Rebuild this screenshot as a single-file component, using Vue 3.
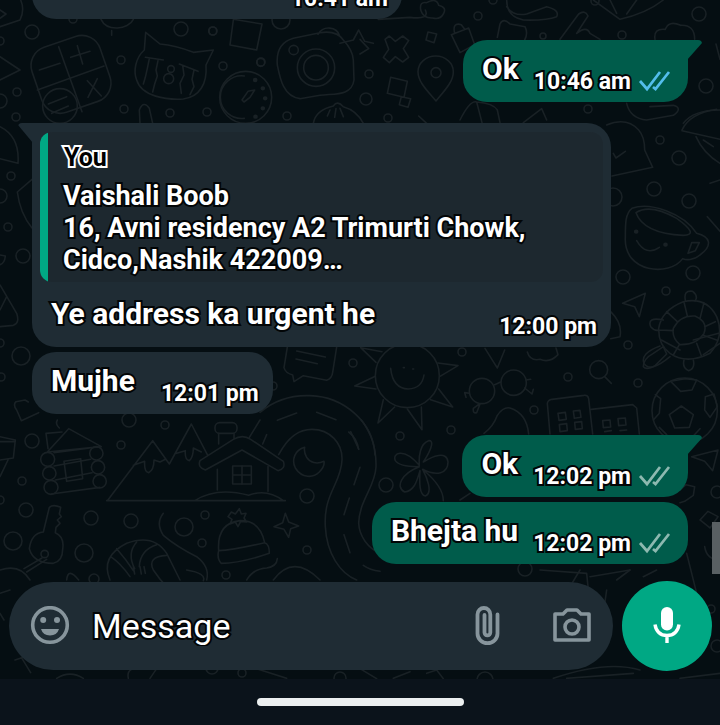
<script setup>
import { ref } from 'vue'

const draft = ref('')

const messages = [
  { id: 1, mine: false, time: '10:41 am', wide: true },
  { id: 2, mine: true, text: 'Ok', time: '10:46 am', read: true, first: true },
  {
    id: 3,
    mine: false,
    text: 'Ye address ka urgent he',
    time: '12:00 pm',
    first: true,
    quote: {
      author: 'You',
      lines: ['Vaishali Boob', '16, Avni residency A2 Trimurti Chowk,', 'Cidco,Nashik 422009…'],
    },
  },
  { id: 4, mine: false, text: 'Mujhe', time: '12:01 pm' },
  { id: 5, mine: true, text: 'Ok', time: '12:02 pm', first: true },
  { id: 6, mine: true, text: 'Bhejta hu', time: '12:02 pm' },
]

// Loose bubbles of the wallpaper: x, y, radius
const dots = [
  [32, 32, 7], [17, 92, 4], [16, 117, 4], [0, 101, 7], [0, 41, 4], [73, 19, 4],
  [121, 60, 4], [124, 109, 4], [181, 29, 7], [213, 31, 4], [223, 66, 4], [261, 62, 4],
  [207, 112, 4], [170, 113, 4], [287, 116, 4], [281, 20, 9],
  [478, 16, 4], [493, 0, 4], [369, 74, 4], [366, 99, 6], [388, 118, 4], [588, 109, 4],
  [543, 36, 3], [699, 14, 7], [706, 86, 7], [595, 1, 4], [622, 35, 4],
  [660, 140, 4], [679, 158, 7], [613, 197, 9], [654, 189, 7], [689, 201, 7],
  [623, 277, 7], [693, 273, 7], [666, 291, 4], [628, 345, 4],
  [11, 176, 4], [0, 196, 7], [8, 227, 4], [23, 256, 7], [21, 356, 9], [0, 343, 4], [1, 377, 4],
  [32, 441, 7], [22, 481, 4], [26, 510, 7], [0, 500, 4], [13, 541, 9], [84, 553, 9],
  [91, 518, 7], [131, 521, 7], [184, 527, 9], [205, 515, 4], [202, 543, 4], [121, 445, 4],
  [129, 420, 7], [165, 425, 4], [307, 496, 7], [307, 550, 4], [226, 575, 4], [94, 579, 5],
  [353, 363, 4], [462, 352, 4], [568, 377, 4], [638, 383, 4], [534, 410, 4], [451, 430, 4],
  [400, 436, 4], [386, 485, 7], [717, 492, 6], [525, 569, 7], [273, 386, 4],
  [711, 609, 4], [717, 646, 6], [212, 668, 6], [242, 673, 4], [340, 678, 6], [485, 680, 8],
]
</script>

<template>
  <main class="screen">
    <section class="chat">
      <svg class="wallpaper" viewBox="0 0 720 679" preserveAspectRatio="xMinYMin slice" aria-hidden="true">
        <circle v-for="(d, i) in dots" :key="i" :cx="d[0]" :cy="d[1]" :r="d[2]" />
        <!-- calculator, cat, stopwatch, camera -->
        <g transform="scale(.33333)" class="fine">
          <rect x="105" y="120" width="216" height="206" rx="58" transform="rotate(-19 213 223)" />
          <path d="M176 140 246 335M112 270 312 198M118 210 180 190M232 137 248 192M212 172 270 154M262 242 304 288M292 236 264 292M145 312 200 290M155 340 205 318" />
          <circle cx="180" cy="318" r="52" />
          <path d="M437 97 433 150C405 175 400 215 410 240 425 290 500 300 550 297 600 290 622 250 618 195L640 150 580 157C550 145 520 135 480 132ZM436 172 490 180M538 192 594 214M448 176 442 205 436 232 430 252M474 182 468 210 472 228 464 252 458 276M548 196 552 225 540 250 544 280M582 210 576 238 582 260 570 284" />
          <circle cx="506" cy="236" r="15" /><circle cx="513" cy="207" r="10" />
          <circle cx="737" cy="292" r="78" />
          <path d="M733 228a64 64 0 1 0 0 127M726 300 744 274 764 270 750 292 732 306Z" />
          <path d="M765 240h1M788 265h1M795 295h1M788 325h1M766 350h1" class="spot" />
          <path d="M700 60 690 135 770 150 786 72M700 58 786 72M954 103C970 75 1010 80 1018 106M832 195C828 150 845 125 880 115L960 98Q1010 90 1030 120 1058 150 1060 180L1062 240C1055 290 1000 280 960 286L900 296C850 290 840 235 832 195Z" />
          <circle cx="948" cy="203" r="56" /><circle cx="948" cy="203" r="37" /><circle cx="881" cy="150" r="14" />
          <circle cx="638" cy="93" r="12" /><circle cx="782" cy="187" r="12" />
          <path d="M1020 130 1060 120 1076 90 1094 124 1120 130M940 370C945 340 970 325 1000 318Q1012 300 1030 320C1065 330 1080 350 1090 370M990 330 982 348M1008 326 1004 352M1020 325 1030 350M420 370 418 330Q430 300 448 325L458 370M303 58C320 95 385 90 400 58M335 92V106M0 80 60 60Q75 30 62 0M0 30 18 42 0 55M0 170 60 210 0 240" />
        </g>
        <!-- padlock, pin, plane, hand -->
        <g transform="translate(360 0) scale(.33333)" class="fine">
          <path d="M55 58 150 52Q210 60 196 30M182 30Q178 4 200 8 230-8 236 16 262 22 250 42 240 60 218 54 190 56 182 30ZM75 118 88 108 106 124 128 108 146 122 130 146 146 172 128 186 106 170 88 188 70 172 86 148ZM204 96 230 102 222 128 198 120ZM274 104 326 84 344 134 300 158ZM284 100Q276 66 304 74L314 88M228 303C200 270 174 245 174 215A52 46 0 0 1 280 215C280 245 255 270 228 303ZM92 232 142 244 132 292 82 280ZM124 290 152 296 144 322 118 314ZM0 118 26 146 0 162" />
          <circle cx="228" cy="218" r="15" />
          <path d="M412 112 420 72Q430 52 450 72L495 80Q505 100 494 120M440 20Q460 50 500 42L560 20Q600 30 590 50 560 62 490 60 440 50 440 0M600 118 656 42Q675 28 684 48L650 100Q680 76 690 100L720 118M700 0 780 58Q860 40 910 0M770 40 750 0M800 42 830 0M885 118Q880 84 916 88 926 60 962 76 1004 74 1004 118M800 310Q810 355 860 360L940 346Q970 324 940 316L870 320M176 348 200 370M300 360Q330 300 350 306 400 310 412 330L420 368M350 306 366 368M490 368 545 326 560 360M970 370Q1000 330 1080 330" />
        </g>
        <!-- bell, cup, turtle -->
        <g transform="translate(600 0) scale(.33333)" class="fine">
          <path d="M20 375Q80 350 116 390 134 410 134 450L158 502 36 528M40 460 48 474 76 454M246 390Q270 340 350 328M246 392 360 418M288 410Q310 460 360 490M310 420 340 440M330 550 360 540M322 650 360 694M348 132 360 178M96 625C150 605 250 640 290 700 330 710 340 735 300 765 280 782 258 780 248 776 210 830 70 820 76 712 76 670 76 640 96 625ZM108 638Q150 610 230 655 300 705 250 706 130 700 108 638ZM275 728 298 728 286 752 264 760ZM110 722Q138 770 178 742M68 910 136 880 118 950 104 920ZM32 935Q68 970 60 1010L32 1016" />
          <path d="M108 695h1M196 734h1" class="spot" />
          <path d="M176 985Q185 930 250 905 320 890 350 950 375 1010 330 1060 260 1095 210 1060 175 1035 176 985ZM220 985Q240 945 285 948 325 965 312 1000 290 1035 240 1034 215 1015 220 985ZM200 935 232 965M252 906 262 948M312 908 300 955M346 965 314 980M350 1020 310 1006M290 1030 305 1070M238 1034 220 1065M176 990 220 992M256 900Q250 870 278 874 296 888 285 904M190 960Q140 950 152 980 165 995 178 990M180 1038Q120 1060 132 1090 150 1120 210 1070" />
        </g>
        <!-- left margin shapes -->
        <g transform="translate(0 120) scale(.33333)" class="fine">
          <path d="M0 20Q60 50 54 130L0 116M96 178 52 216Q60 280 96 324M0 405 16 408Q14 430 0 434M0 495 50 580Q60 610 40 616L0 620M20 530 0 570M0 950 46 960 40 1014 0 1020M0 965H46M24 1020 0 1070M50 870Q38 855 48 845L75 840 85 846M50 870 64 902 116 878" />
        </g>
        <!-- speech card, sun, road -->
        <g transform="translate(260 335) scale(.33333)" class="fine">
          <path d="M82 36 72 98Q76 114 98 120L102 140 130 122 200 136Q216 130 218 112L230 36M110 48 196 66M108 72 172 86" />
          <circle cx="442" cy="122" r="96" />
          <path d="M392 100Q398 160 445 162 486 160 492 120M348 82 302 38 366 50M346 124 284 153 348 162M370 194 354 264 404 216M442 222 486 284 484 216M512 194 578 216 536 162M534 84 594 92 540 124M430 98h3M458 102h3" />
          <path d="M0 232C50 190 100 180 150 182 250 185 340 260 345 360M52 256 110 234M170 232 228 254M272 290 296 342" />
        </g>
        <!-- glasses, buildings, ball, flower -->
        <g transform="translate(360 340) scale(.33333)" class="fine">
          <circle cx="366" cy="153" r="38" /><circle cx="461" cy="128" r="38" />
          <path d="M404 134 422 126M328 160 314 158 318 172M358 192 340 205Q338 222 350 218L360 192M498 120 512 118M494 144 516 162 520 148M375 25 398 62 412 84 434 30M502 36Q510 64 540 58 570 70 594 44L588 24" />
          <circle cx="716" cy="89" r="27" /><path d="M734 110 754 130" />
          <path d="M570 282 562 190Q564 180 576 178L672 166Q684 164 686 176L698 282M694 208 818 194 830 204 838 282M594 220 616 217 619 238 597 241ZM640 213 660 211 663 232 643 235ZM598 254 620 251 622 272 600 275ZM644 247 665 245 667 266 646 268ZM728 242 750 240 752 261 730 263ZM774 236 796 234 798 255 776 257ZM734 275 754 272M780 272 800 270" />
          <circle cx="974" cy="212" r="98" />
          <path d="M964 198 1000 224 988 262 944 264 928 224ZM932 124 962 154 996 150 1010 120 975 116ZM886 164 902 176 898 220 880 240M1036 170 1062 162 1072 200 1050 232 1034 210ZM898 262 920 284M1020 266 1002 286M960 30 904 0M850 80Q850 56 880 40L910 20 920 42 886 76Q860 92 850 80ZM972 60Q966 84 986 92 1006 86 1000 60M1000 0 1076-20M1030 44 1080 10" />
          <path d="M178 376C130 320 96 340 106 362 120 382 160 380 178 380 126 400 104 440 134 456 166 452 172 416 180 392 178 430 178 464 196 468 220 460 200 410 188 388 230 410 264 400 264 366 260 330 216 350 190 366 220 320 220 300 206 302 180 310 176 350 178 376M190 390Q250 440 250 482M372 280Q400 260 412 226 430 200 450 204 500 220 506 282M995 350 1074 330 1058 392 1034 364ZM960 450 978 434 1004 440 1000 466 974 484 960 488M1020 540 1044 514 1074 530 1050 564ZM1034 620Q1040 660 1080 660M300 480 330 460M540 690 680 700 690 800M770 720 810 690M980 640 1010 760" />
        </g>
        <!-- cabin, mountains, house, moon, key, hat -->
        <g transform="translate(0 420) scale(.33333)" class="fine">
          <path d="M142 96 206 26 304 80ZM144 86 138 40 186 36M178 24Q165 12 172 0M162 98 270 84M162 138 272 118M166 180 276 158M154 222 300 202M192 124 242 116 248 176 200 184Z" />
          <circle cx="143" cy="118" r="21" /><circle cx="148" cy="160" r="20" /><circle cx="153" cy="202" r="21" /><circle cx="289" cy="100" r="20" /><circle cx="294" cy="142" r="20" /><circle cx="299" cy="184" r="20" />
          <path d="M322 242 458 62 508 132 574 12 622 104M400 136 434 124Q432 156 446 158 462 150 462 120L480 126 496 118M530 100 556 92Q554 120 568 122 580 112 580 84L604 96M320 242H856M584 242Q650 200 746 226 800 205 850 242M652 148V210M804 140V214M600 122 700 58Q728 42 752 58L850 124Q858 146 834 152L726 90 616 150Q592 142 600 122ZM656 72V40M702 56V40" />
          <rect x="645" y="8" width="66" height="32" rx="14" /><rect x="698" y="138" width="56" height="54" /><path d="M726 138V192M698 165H754M748 52 780 0M788 72 800 44M836 104C870 40 905 28 936 28 990 28 1028 70 1026 120 1024 190 970 220 976 320 980 400 1020 460 1070 480M1084 0Q1130 60 1128 140C1126 200 1078 240 1076 310 1078 350 1105 385 1140 400M1046 36Q1070 54 1076 88M1080 142 1062 194M1048 234 1032 284M1032 344 1050 398M1090 436Q1110 450 1140 454" />
          <path d="M914 82C884 90 874 120 886 144 906 176 940 174 958 156 968 146 974 134 972 124 950 134 930 128 920 112 914 102 912 92 914 82ZM856 280 866 306 896 318 872 326 866 352 852 328 822 320 848 308Z" />
          <path d="M148 262Q160 252 182 262L178 282 184 290 172 300 180 310 168 322 166 338Q194 350 188 388 188 424 160 430 100 430 88 386 94 340 130 336ZM126 414 72 446M140 418 80 456M0 450Q60 430 90 480M200 480Q204 440 236 480" /><circle cx="134" cy="402" r="11" />
          <path d="M330 480Q300 410 380 370 460 340 500 400L540 480M332 410Q362 430 390 470M350 386Q380 420 400 452M410 366Q380 400 404 446M470 374Q420 390 418 440M500 406Q440 410 460 450 480 480 500 500M400 440 404 462M420 440 424 462M432 440 436 460M490 280Q466 310 490 346 530 380 590 410 630 440 620 480" />
          <path d="M656 392Q650 310 720 302 780 300 794 368M656 392Q700 390 794 368 808 372 808 400 720 430 664 430 650 416 656 392ZM684 290 694 276 706 282 718 266 724 282 738 280 732 294 740 306 722 304 714 320 706 306 690 312 696 298ZM740 480Q760 446 800 444 830 440 832 416M820 480Q880 400 960 480" />
        </g>
        <!-- shapes behind the message bar -->
        <g transform="translate(0 570) scale(.33333)" class="fine">
          <path d="M0 70 30 60M0 130 12 150M45 270 70 262M64 262 92 308M170 325Q210 300 250 325M385 325Q380 300 400 296M470 296 450 325M770 296 860 325M560 0Q620 10 610 32M1440 240H1540M1680 100 1740 0M1770 20 1890 0M1930 20 1970 0" />
          <path d="M1080 296 1130 326M1180 325 1230 305M1280 310 1310 300 1330 326M1660 325Q1820 270 1920 300M1700 325 1900 310M2040 325 2160 310M1820 60 1800 200M1540 234 1640 230" />
        </g>
      </svg>

      <ol class="messages">
        <li
          v-for="m in messages"
          :key="m.id"
          class="bubble"
          :class="{ mine: m.mine, first: m.first, quoting: m.quote, wide: m.wide }"
        >
          <blockquote v-if="m.quote" class="quote">
            <cite class="author">{{ m.quote.author }}</cite>
            <p v-for="line in m.quote.lines" :key="line" class="quote-line">{{ line }}</p>
          </blockquote>
          <div class="body">
            <p v-if="m.text" class="text">{{ m.text }}</p>
            <span class="meta">
              <time>{{ m.time }}</time>
              <svg v-if="m.mine" class="ticks" :class="{ read: m.read }" viewBox="0 0 34 24" aria-hidden="true">
                <path d="M2 12 9 20 22 3M15 18 17.500 20 31 3" />
              </svg>
            </span>
          </div>
        </li>
      </ol>

      <form class="composer" @submit.prevent>
        <div class="field">
          <button type="button" class="icon" aria-label="Emoji">
            <svg width="40" height="40" viewBox="0 0 40 40">
              <circle cx="20" cy="19" r="17.300" fill="none" stroke="currentColor" stroke-width="3.600" />
              <circle cx="13.200" cy="14" r="3" /><circle cx="27" cy="14" r="3" />
              <path d="M11 23H29Q27 29.500 20 29.500 13 29.500 11 23Z" />
            </svg>
          </button>
          <input v-model="draft" class="entry" type="text" placeholder="Message" aria-label="Message" />
          <button type="button" class="icon" aria-label="Attach">
            <svg width="28" height="40" viewBox="0 0 28 40">
              <path d="M23.500 8.500V27.500A10 9.600 0 0 1 3.500 27.500V8.500A6.400 6.500 0 0 1 16.300 8.500V26.500A2.900 2.900 0 0 1 10.500 26.500V9" fill="none" stroke="currentColor" stroke-width="3.800" stroke-linecap="round" />
            </svg>
          </button>
          <button type="button" class="icon camera" aria-label="Camera">
            <svg width="40" height="40" viewBox="0 0 40 40" fill="none" stroke="currentColor" stroke-width="3.600" stroke-linejoin="round">
              <path d="M3 8H11L15 4H25L29 8H37V34H3Z" />
              <circle cx="20" cy="21" r="7" />
            </svg>
          </button>
        </div>
        <button type="button" class="mic" aria-label="Record voice message">
          <svg width="40" height="40" viewBox="0 0 40 40">
            <rect x="14" y="1" width="12" height="23.500" rx="6" fill="currentColor" />
            <path d="M8 18.500C9 25.500 13.500 29.500 20 29.500S31 25.500 32 18.500M20 30V37" fill="none" stroke="currentColor" stroke-width="3.400" />
          </svg>
        </button>
      </form>
      <span class="scroll-thumb"></span>
    </section>
    <footer class="nav"><span class="home"></span></footer>
  </main>
</template>

<style>
body {
  margin: 0;
  background: #0b131b;
}
</style>

<style scoped>
.screen {
  display: flex;
  flex-direction: column;
  height: 100vh;
  overflow: hidden;
  font-family: Roboto, "Liberation Sans", sans-serif;
  color: #fff;
}

.chat {
  position: relative;
  display: flex;
  flex: 1;
  flex-direction: column;
  min-height: 0;
  overflow: hidden;
  background: #050e12;
}

.wallpaper {
  position: absolute;
  inset: 0;
  width: 100%;
  height: 100%;
  fill: none;
  stroke: #192125;
  stroke-width: 1.6;
  stroke-linejoin: round;
  stroke-linecap: round;
}

.fine {
  stroke-width: 4.8;
}

.spot {
  stroke-width: 13;
}

.messages {
  position: relative;
  display: flex;
  flex: 1;
  flex-direction: column;
  justify-content: flex-end;
  min-height: 0;
  margin: 0;
  padding: 0 32px 17px;
  list-style: none;
}

.bubble {
  position: relative;
  flex: none;
  align-self: flex-start;
  margin-top: 5px;
  border-radius: 24px;
  background: #1f2c34;
}

.first {
  margin-top: 21px;
}

.wide {
  min-width: 370px;
}

.quoting {
  box-sizing: border-box;
  width: calc(100% - 77px);
  padding-top: 9px;
  border-top-left-radius: 0;
}

.mine {
  align-self: flex-end;
  background: #005c4b;
}

.mine.first {
  border-top-right-radius: 0;
}

.first::before {
  content: "";
  position: absolute;
  top: 0;
  left: -14px;
  width: 15px;
  height: 20px;
  border-top-left-radius: 4px;
  background: inherit;
  clip-path: polygon(0 0, 100% 0, 100% 100%, 0 2px);
}

.mine.first::before {
  right: -14px;
  left: auto;
  border-top-left-radius: 0;
  border-top-right-radius: 4px;
  clip-path: polygon(0 0, 100% 0, 100% 3px, 0 100%);
}

.body {
  display: flex;
  align-items: flex-end;
  justify-content: space-between;
  gap: 26px;
  min-height: 62px;
  padding: 0 14px 0 19px;
}

.mine .body {
  gap: 15px;
  padding-right: 16px;
}

.wide .body {
  justify-content: flex-end;
}

.quoting .body {
  min-height: 65px;
}

.text {
  margin: 0;
  padding: 10px 0 14px;
  font-size: 30px;
  font-weight: 700;
  line-height: 38px;
}

.text,
.meta,
.quote-line,
.entry {
  -webkit-text-stroke: 4px #020506;
  paint-order: stroke fill;
}

.meta {
  display: flex;
  align-items: flex-start;
  gap: 7px;
  padding-bottom: 7px;
  font-size: 23px;
  font-weight: 700;
  line-height: 26px;
  white-space: nowrap;
}

.ticks {
  width: 34px;
  height: 24px;
  fill: none;
  stroke: #8db9b0;
  stroke-width: 2.7;
}

.read {
  stroke: #53bdeb;
}

.quote {
  margin: 0 8px;
  padding: 11px 16px 6px 23px;
  border-radius: 12px;
  background: linear-gradient(to right, #00a884 8px, #1d282f 8px);
}

.author {
  display: block;
  margin-bottom: 7px;
  padding-left: 1px;
  color: #000;
  font-size: 25px;
  font-style: normal;
  font-weight: 700;
  line-height: 30px;
  -webkit-text-stroke: 4px #fff;
  paint-order: stroke fill;
}

.quote-line {
  margin: 0;
  font-size: 27px;
  font-weight: 700;
  line-height: 32px;
}

.composer {
  position: relative;
  display: flex;
  align-items: center;
  gap: 9px;
  padding: 0 8px 8px 9px;
}

.field {
  display: flex;
  flex: 1;
  align-items: center;
  box-sizing: border-box;
  min-width: 0;
  height: 88px;
  padding: 0 21px;
  border-radius: 44px;
  background: #1f2c34;
}

button {
  display: flex;
  flex: none;
  align-items: center;
  justify-content: center;
  padding: 0;
  border: 0;
  background: none;
  color: #87959c;
  cursor: pointer;
}

.icon svg {
  fill: currentColor;
}

.icon.camera svg {
  fill: none;
}

.camera {
  margin-left: 50px;
}

.entry {
  flex: 1;
  min-width: 0;
  padding: 0 22px;
  border: 0;
  outline: 0;
  background: none;
  color: #fff;
  font: 400 34px/44px Roboto, "Liberation Sans", sans-serif;
}

.entry::placeholder {
  color: #fff;
  opacity: 1;
}

.mic {
  width: 90px;
  height: 90px;
  border-radius: 50%;
  background: #00a884;
  color: #fff;
}

.scroll-thumb {
  position: absolute;
  right: 0;
  bottom: 105px;
  width: 8px;
  height: 52px;
  background: #596063;
}

.nav {
  display: flex;
  align-items: center;
  justify-content: center;
  height: 46px;
  background: #0b131b;
}

.home {
  width: 207px;
  height: 8px;
  border-radius: 4px;
  background: #eceff0;
}
</style>
